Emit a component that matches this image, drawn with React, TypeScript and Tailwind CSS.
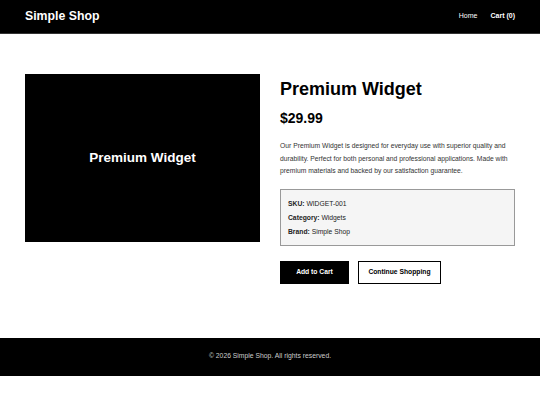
import React from "react";

function App() {
  return (
    <div className="min-h-screen bg-white font-['Liberation_Sans',Arial,Helvetica,sans-serif] text-black">
      <header className="flex h-[34px] items-center justify-between border-b border-[#333] bg-black px-[25px]">
        <h1 className="text-[12.3px] font-bold text-white">Simple Shop</h1>
        <nav className="flex items-center gap-[13px] text-[7px] text-white">
          <a href="#">Home</a>
          <a href="#" className="font-bold">
            Cart (0)
          </a>
        </nav>
      </header>

      <main className="grid grid-cols-2 gap-5 px-[25px] pt-[40px] pb-[54px]">
        <div className="flex h-[168px] items-center justify-center bg-black">
          <span className="text-[13.5px] font-bold text-white">Premium Widget</span>
        </div>

        <div className="flex flex-col">
          <h2 className="mt-[4px] text-[18px] leading-[22px] font-bold">Premium Widget</h2>
          <p className="mt-[9px] text-[14px] leading-[18px] font-bold">$29.99</p>
          <p className="mt-[13px] text-[6.75px] leading-[12.5px] text-[#333]">
            Our Premium Widget is designed for everyday use with superior quality and durability.
            Perfect for both personal and professional applications. Made with premium materials
            and backed by our satisfaction guarantee.
          </p>
          <div className="mt-[11px] flex h-[57px] flex-col justify-center gap-[5px] border border-[#999] bg-[#f5f5f5] px-[7px] text-[6.75px] leading-[9px] text-[#222]">
            <p>
              <span className="font-bold">SKU:</span> WIDGET-001
            </p>
            <p>
              <span className="font-bold">Category:</span> Widgets
            </p>
            <p>
              <span className="font-bold">Brand:</span> Simple Shop
            </p>
          </div>
          <div className="mt-[15px] flex gap-[9px]">
            <button className="h-[23px] w-[69px] bg-black text-[6.75px] font-bold text-white">
              Add to Cart
            </button>
            <button className="h-[23px] w-[83px] border border-black bg-white text-[6.75px] font-bold text-black">
              Continue Shopping
            </button>
          </div>
        </div>
      </main>

      <footer className="flex h-[38px] items-center justify-center bg-black text-[6.8px] text-[#ccc]">
        © 2026 Simple Shop. All rights reserved.
      </footer>
    </div>
  );
}

export default App;
